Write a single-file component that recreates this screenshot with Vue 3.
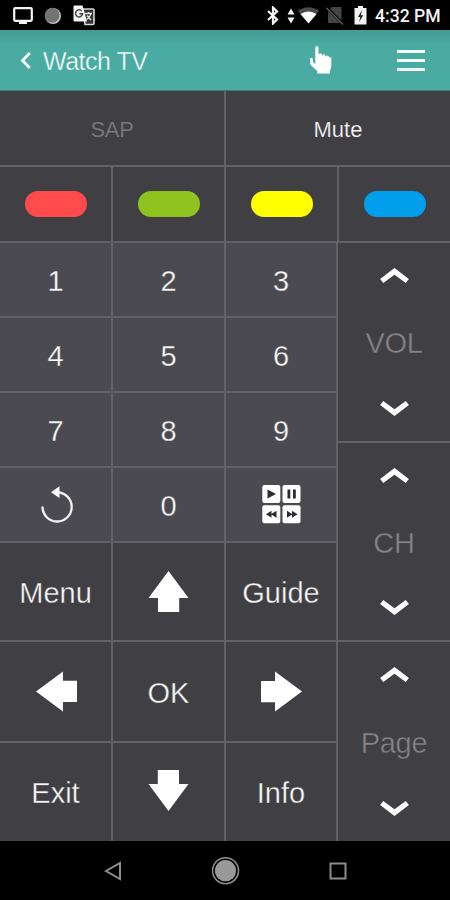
<template>
  <div class="screen">
    <div class="status-bar">
      <svg class="status-tv" width="20" height="18" viewBox="0 0 20 18">
        <rect x="1.2" y="1.2" width="17.6" height="12.6" rx="1" fill="none" stroke="#f4f4f4" stroke-width="2.2" />
        <rect x="6" y="14" width="8" height="3" fill="#f4f4f4" />
      </svg>
      <svg class="status-sync" width="18" height="18" viewBox="0 0 18 18">
        <circle cx="9" cy="9" r="8" fill="#c4c4c4" />
        <circle cx="8.2" cy="8.2" r="7.4" fill="#737373" />
      </svg>
      <svg class="status-translate" width="22" height="21" viewBox="0 0 22 21">
        <path d="M10 4H20a1 1 0 0 1 1 1V18.5a1 1 0 0 1-1 1H12Z" fill="#333" stroke="#d6d6d6" stroke-width="1.6" />
        <path d="M1.5 0.5H9.5L14 16.5H1.5A1 1 0 0 1 .5 15.5V1.5A1 1 0 0 1 1.5 .5Z" fill="#f4f4f4" />
        <path d="M8.7 6.1A3.500 3.500 0 1 0 9.500 8.800H6.300" fill="none" stroke="#444" stroke-width="1.5" />
        <path d="M12 8.500H19M15.500 7V8.500M18 8.500C17.500 11.500 15.500 13 13.500 14.500M14 10.500L18 15" fill="none" stroke="#e4e4e4" stroke-width="1.4" />
      </svg>
      <div class="status-spacer"></div>
      <svg class="status-bluetooth" width="12" height="19" viewBox="0 0 12 19">
        <path d="M1 5L10 13.500L6 17.500V1.500L10 5.500L1 14" fill="none" stroke="#f4f4f4" stroke-width="2.2" />
      </svg>
      <svg class="status-traffic" width="8" height="16" viewBox="0 0 8 16">
        <path d="M4 0.500L7.500 6.500H.5ZM4 15.500L.5 9.500H7.500Z" fill="#f4f4f4" />
      </svg>
      <svg class="status-wifi" width="21" height="17" viewBox="0 0 21 17">
        <path d="M0 4Q10.500-3.500 21 4L10.500 16.500Z" fill="#4c4c4c" />
        <path d="M2.500 7Q10.500 2 18.500 7L10.500 16.500Z" fill="#fff" />
      </svg>
      <svg class="status-sim" width="18" height="19" viewBox="0 0 18 19">
        <path d="M5.500 1H15.500V17H2V5Z" fill="#444" />
        <path d="M1 2L17.300 18.300" stroke="#000" stroke-width="3" />
        <path d="M0.500 2L17 18.500" stroke="#5a5a5a" stroke-width="1.5" />
      </svg>
      <svg class="status-battery" width="13" height="19" viewBox="0 0 13 19">
        <path d="M4 0H9V2H12.500V18.500H.5V2H4Z" fill="#f4f4f4" />
        <path d="M8 4L4 11H6.300L5.200 16L9.200 9.300H6.800Z" fill="#222" />
      </svg>
      <span class="status-time">4:32 PM</span>
    </div>

    <header class="header">
      <svg class="header-back" width="12" height="18" viewBox="0 0 12 18">
        <path d="M9.800 1L2.500 8.500L9.800 16" fill="none" stroke="#fff" stroke-width="2.7" />
      </svg>
      <h1 class="header-title">Watch TV</h1>
      <svg class="header-hand" width="22" height="28" viewBox="0 0 22 28">
        <path
          d="M5.300 1.800Q5.300 0 6.900 0T8.500 1.800V9.200Q8.600 7.300 10.300 7.300T12 9.200V10Q12.200 8.300 13.800 8.300T15.500 10.200V11Q15.900 9.500 17.400 9.500T19 11.200V11.800Q19.500 10.600 20.600 11.200T21.300 13V20Q21.300 22.500 20 24.500V27.500H7.200V25L1.200 19.500Q0 18 0 16V13.200Q0 11.700 1.300 11.700T3 13.200V16.200L5.300 18Z"
          fill="#fff"
        />
      </svg>
      <div class="header-menu">
        <span></span>
        <span></span>
        <span></span>
      </div>
    </header>

    <main class="remote">
      <div class="row-top">
        <button class="key key-small key-dim">SAP</button>
        <button class="key key-small">Mute</button>
      </div>

      <div class="row-colors">
        <button v-for="color in colors" :key="color" class="key key-color">
          <span class="pill" :class="`pill-${color}`"></span>
        </button>
      </div>

      <div class="row-main">
        <div class="pad">
          <button
            v-for="key in keys"
            :key="key.id"
            class="key"
            :class="[`key-${key.type}`, `key-${key.id}`]"
          >
            <svg v-if="key.id === 'replay'" width="34" height="38" viewBox="0 0 34 38">
              <path d="M2.500 20.500A14.600 14.600 0 1 0 17.500 6.300" fill="none" stroke="#f2f2f2" stroke-width="2.3" />
              <path d="M11 6.200L19.500 0.300V12Z" fill="#fff" />
            </svg>
            <svg v-else-if="key.id === 'media'" width="39" height="39" viewBox="0 0 39 39">
              <g fill="#fff">
                <rect x="0.300" y="0" width="18" height="18" rx="2" />
                <rect x="20.500" y="0" width="18" height="18" rx="2" />
                <rect x="0.300" y="20.300" width="18" height="18" rx="2" />
                <rect x="20.500" y="20.300" width="18" height="18" rx="2" />
              </g>
              <g fill="#2c2b30">
                <path d="M5.500 4.500L14 9L5.500 13.500Z" />
                <path d="M25.500 4.500H28.300V13.500H25.500ZM31 4.500H33.800V13.500H31Z" />
                <path d="M4 29.300L9.500 25.800V32.800ZM9 29.300L14.500 25.800V32.800Z" />
                <path d="M25 25.800L30.500 29.300L25 32.800ZM30 25.800L35.500 29.300L30 32.800Z" />
              </g>
            </svg>
            <svg v-else-if="key.type === 'arrow'" :class="`arrow-${key.id}`" width="41" height="41" viewBox="0 0 41 41">
              <path d="M20.500 0L40.500 27H31.200V41H10V27H.5Z" fill="#fff" />
            </svg>
            <template v-else>{{ key.label }}</template>
          </button>
        </div>

        <div class="rockers">
          <div v-for="name in rockers" :key="name" class="rocker">
            <svg width="29" height="16" viewBox="0 0 29 16">
              <path d="M1.700 13L14.500 3.400L27.300 13" fill="none" stroke="#fff" stroke-width="5.3" />
            </svg>
            <span class="rocker-label">{{ name }}</span>
            <svg width="29" height="16" viewBox="0 0 29 16">
              <path d="M1.700 3L14.500 12.600L27.300 3" fill="none" stroke="#fff" stroke-width="5.3" />
            </svg>
          </div>
        </div>
      </div>
    </main>

    <nav class="nav-bar">
      <svg width="18" height="20" viewBox="0 0 18 20">
        <path d="M16 2V18L2 10Z" fill="none" stroke="#8c8c8c" stroke-width="2" />
      </svg>
      <svg width="28" height="28" viewBox="0 0 28 28">
        <circle cx="13.5" cy="13.7" r="13" fill="none" stroke="#8c8c8c" stroke-width="1.6" />
        <circle cx="13.5" cy="13.7" r="10.6" fill="#999" />
      </svg>
      <svg width="18" height="18" viewBox="0 0 18 18">
        <rect x="1.5" y="1.5" width="15" height="15" fill="none" stroke="#8c8c8c" stroke-width="2" />
      </svg>
    </nav>
  </div>
</template>

<script setup>
const colors = ['red', 'green', 'yellow', 'blue'];

const rockers = ['VOL', 'CH', 'Page'];

const digit = (n) => ({ id: `digit-${n}`, label: n, type: 'number' });

const keys = [
  ...[1, 2, 3, 4, 5, 6, 7, 8, 9].map(digit),
  { id: 'replay', type: 'icon' },
  digit(0),
  { id: 'media', type: 'icon' },
  { id: 'menu', label: 'Menu', type: 'text' },
  { id: 'up', type: 'arrow' },
  { id: 'guide', label: 'Guide', type: 'text' },
  { id: 'left', type: 'arrow' },
  { id: 'ok', label: 'OK', type: 'text' },
  { id: 'right', type: 'arrow' },
  { id: 'exit', label: 'Exit', type: 'text' },
  { id: 'down', type: 'arrow' },
  { id: 'info', label: 'Info', type: 'text' }
];
</script>

<style>
body {
  background: #000;
}
</style>

<style scoped>
.screen {
  width: 450px;
  height: 900px;
  display: flex;
  flex-direction: column;
  overflow: hidden;
  background: #000;
  font-family: 'Liberation Sans', Arial, sans-serif;
}

svg {
  display: block;
  flex: none;
}

/* Status bar */
.status-bar {
  height: 30px;
  box-sizing: border-box;
  padding: 1px 9px 0 13px;
  display: flex;
  align-items: center;
}

.status-sync {
  margin-left: 11px;
}

.status-translate {
  margin-left: 11px;
}

.status-spacer {
  flex: 1;
}

.status-traffic {
  margin-left: 8px;
}

.status-wifi {
  margin-left: 3px;
}

.status-sim {
  margin-left: 7px;
}

.status-battery {
  margin-left: 10px;
}

.status-time {
  margin-left: 8px;
  width: 66px;
  font-family: Roboto, sans-serif;
  font-size: 17.6px;
  font-weight: 500;
  line-height: 20px;
  white-space: nowrap;
  color: #f4f4f4;
}

/* Header */
.header {
  height: 61px;
  box-sizing: border-box;
  border-bottom: 1px solid #3d7c79;
  padding: 1px 25px 0 20px;
  display: flex;
  align-items: center;
  background: linear-gradient(#459b92, #49aba2 14px);
}

.header-title {
  flex: 1;
  margin: 0 0 0 11px;
  padding-top: 2px;
  font-size: 25px;
  font-weight: 400;
  letter-spacing: -0.5px;
  color: #fff;
  -webkit-text-stroke: 0.4px #49aba2;
}

.header-hand {
  margin-right: 65px;
  padding-bottom: 2px;
}

.header-menu {
  width: 28px;
  display: flex;
  flex-direction: column;
  gap: 6px;
}

.header-menu span {
  height: 3px;
  background: #f6ffff;
}

/* Remote */
.remote {
  height: 750px;
  display: flex;
  flex-direction: column;
  gap: 2px;
  background: #626166;
}

.row-top {
  height: 74px;
  display: grid;
  grid-template-columns: 224px 224px;
  gap: 2px;
}

.row-colors {
  height: 74px;
  display: grid;
  grid-template-columns: repeat(4, 111px);
  gap: 2px;
}

.row-main {
  flex: 1;
  display: flex;
  gap: 2px;
}

.pad {
  display: grid;
  grid-template-columns: 111px 111px 110px;
  grid-template-rows: repeat(4, 73px) 97px 99px 98px;
  gap: 2px;
}

.rockers {
  flex: 1;
  display: grid;
  grid-template-rows: 198px 197px 199px;
  gap: 2px;
}

.key {
  min-width: 0;
  margin: 0;
  border: 0;
  padding: 0;
  display: flex;
  align-items: center;
  justify-content: center;
  background: #403f44;
  color: #f6f6f6;
  font-family: inherit;
  font-size: 29px;
}

.key-number,
.key-icon {
  background: #4b4a50;
}

.key-number {
  padding-top: 3px;
  -webkit-text-stroke: 0.3px #4b4a50;
}

.key-text {
  padding-top: 3px;
  -webkit-text-stroke: 0.35px #403f44;
}

.key-replay,
.key-left {
  padding-left: 2px;
}

.key-down {
  padding-bottom: 3px;
}

.key-small {
  padding-top: 3px;
  font-size: 22px;
  -webkit-text-stroke: 0.2px #403f44;
}

.key-dim {
  letter-spacing: -0.4px;
  color: #7b7a7e;
}

.pill {
  width: 62px;
  height: 26px;
  border-radius: 13px;
}

.pill-red {
  background: #ff4b4b;
}

.pill-green {
  background: #8fc31f;
}

.pill-yellow {
  background: #ffff00;
}

.pill-blue {
  background: #009fec;
}

.arrow-right {
  transform: rotate(90deg);
}

.arrow-down {
  transform: rotate(180deg);
}

.arrow-left {
  transform: rotate(270deg);
}

.rocker {
  padding: 25px 0;
  display: flex;
  flex-direction: column;
  align-items: center;
  justify-content: space-between;
  background: #403f44;
}

.rocker-label {
  padding-top: 3px;
  font-size: 29px;
  letter-spacing: -0.3px;
  color: #848387;
  -webkit-text-stroke: 0.4px #403f44;
}

/* Navigation bar */
.nav-bar {
  flex: 1;
  padding: 0 103px 0 104px;
  display: flex;
  align-items: center;
  justify-content: space-between;
}
</style>
